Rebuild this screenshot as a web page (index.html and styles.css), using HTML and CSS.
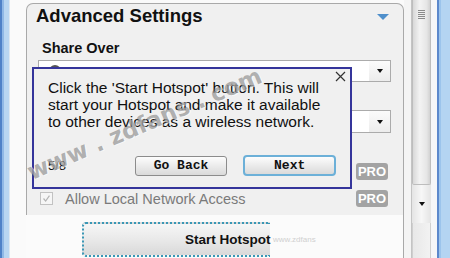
FILE: index.html
```html
<!DOCTYPE html>
<html>
<head>
<meta charset="utf-8">
<link rel="stylesheet" href="styles.css">
</head>
<body>
<div class="win">
  <div class="frame-l"></div>
  <div class="content">
    <section class="panel">
      <div class="panel-head">
        <h1 class="title">Advanced Settings</h1>
        <span class="caret"></span>
      </div>
      <div class="label">Share Over</div>
      <div class="select">
        <span class="sel-icon"></span>
        <span class="sel-val"></span>
        <span class="sel-btn"><i class="tri"></i></span>
      </div>
      <div class="label label2">Internet to Share</div>
      <div class="select">
        <span class="sel-val"></span>
        <span class="sel-btn"><i class="tri"></i></span>
      </div>
      <div class="opt opt1">
        <span class="chk"></span>
        <span class="opt-text">Enable Client Isolation</span>
        <span class="pro">PRO</span>
      </div>
      <div class="opt opt2">
        <span class="chk"><svg width="13" height="13" viewBox="0 0 13 13"><path d="M3 6.5 L5.5 9.5 L10 3" fill="none" stroke="#b4b4b4" stroke-width="1.4"/></svg></span>
        <span class="opt-text">Allow Local Network Access</span>
        <span class="pro">PRO</span>
      </div>
    </section>
    <div class="footer">
      <button class="start">Start Hotspot</button>
      <span class="ghost">www.zdfans</span>
    </div>
  </div>
  <div class="gap"></div>
  <div class="scroll">
    <div class="thumb"><span class="grip"></span></div>
    <div class="sarrow"><i class="tri"></i></div>
    <div class="track"></div>
  </div>
  <div class="gap2"></div>
  <div class="frame-r"></div>
</div>

<div class="dialog">
  <span class="close"><svg width="11" height="11" viewBox="0 0 11 11"><path d="M1 1 L10 10 M10 1 L1 10" stroke="#333" stroke-width="1.2"/></svg></span>
  <p class="msg">Click the 'Start Hotspot' button. This will<br>start your Hotspot and make it available<br>to other devices as a wireless network.</p>
  <div class="dlg-foot">
    <span class="step">5/8</span>
    <button class="dbtn">Go Back</button>
    <button class="dbtn next">Next</button>
  </div>
</div>

<div class="watermark">www . zdfans . com</div>
</body>
</html>
```

FILE: styles.css
```css
* { box-sizing: border-box; }
html, body { margin: 0; padding: 0; }
body {
  width: 450px;
  height: 258px;
  overflow: hidden;
  position: relative;
  background: #f9f9f9;
  font-family: "Liberation Sans", Arial, sans-serif;
}
.win {
  display: flex;
  height: 258px;
}
.frame-l {
  width: 10px;
  background: linear-gradient(to right, #4f82c8 0 2px, #8fb8e6 2px 4px, #b8d6f2 4px 9px, #dde8f2 9px);
}
.content {
  width: 394px;
  padding-left: 16px;
  display: flex;
  flex-direction: column;
  background: #fafafa;
}
.panel {
  margin-top: 3px;
  height: 212px;
  width: 378px;
  background: #f0f0f0;
  border: 1px solid #a9a9a9;
  border-bottom: 0;
  border-radius: 7px 7px 0 0;
}
.panel-head {
  display: flex;
  align-items: flex-start;
  justify-content: space-between;
  padding: 2px 14px 0 9px;
}
.title {
  margin: 0;
  font-size: 18.5px;
  line-height: 20px;
  font-weight: bold;
  color: #111;
}
.caret {
  margin-top: 8px;
  width: 0;
  height: 0;
  border-left: 6px solid transparent;
  border-right: 6px solid transparent;
  border-top: 6px solid #4f8fcb;
}
.label {
  margin: 14px 0 0 15px;
  font-size: 14.5px;
  line-height: 17px;
  font-weight: bold;
  color: #111;
}
.label2 { margin: 5px 0 6px 15px; }
.select {
  margin: 3px 0 0 11px;
  width: 353px;
  height: 22px;
  display: flex;
  background: #fff;
  border: 1px solid #ababab;
}
.label2 + .select { margin-top: 0; height: 23px; }
.sel-icon {
  margin: 4px 0 0 10px;
  width: 12px;
  height: 12px;
  border-radius: 50%;
  border: 2px solid #555;
}
.sel-val { flex: 1; }
.sel-btn {
  width: 21px;
  display: flex;
  align-items: center;
  justify-content: center;
  background: linear-gradient(#fbfbfb, #ececec);
}
.tri {
  display: block;
  width: 0;
  height: 0;
  border-left: 3.5px solid transparent;
  border-right: 3.5px solid transparent;
  border-top: 4px solid #111;
}
.opt {
  display: flex;
  align-items: center;
  height: 17px;
  padding: 0 15px 0 13px;
}
.opt1 { margin-top: 30px; }
.opt2 { margin-top: 10px; }
.chk {
  width: 13px;
  height: 13px;
  border: 1px solid #c2c2c2;
  background: #f6f6f6;
  display: flex;
  align-items: center;
  justify-content: center;
}
.chk svg { display: block; }
.opt-text {
  flex: 1;
  margin-left: 12px;
  font-size: 14.5px;
  color: #7a7a7a;
}
.pro {
  width: 32px;
  height: 17px;
  border-radius: 3px;
  background: #a3a3a3;
  color: #fff;
  font-weight: bold;
  font-size: 13px;
  line-height: 17px;
  text-align: center;
}
.footer {
  flex: 1;
  width: 378px;
  border-right: 1px solid #a9a9a9;
  padding: 7px 0 0 56px;
  display: flex;
  align-items: flex-start;
  background: #fbfbfb;
}
.start {
  width: 188px;
  height: 35px;
  margin: 0;
  padding: 0 0 0 101px;
  text-align: left;
  border: 2px dotted #3a97b5;
  border-right: 0;
  border-radius: 4px 0 0 4px;
  background: linear-gradient(#f6f6f6, #e9e9e9 50%, #d9d9d9);
  font-family: "Liberation Sans", Arial, sans-serif;
  font-weight: bold;
  font-size: 13.5px;
  color: #111;
  white-space: nowrap;
}
.ghost {
  margin: 13px 0 0 3px;
  font-size: 8px;
  color: #d0d0d0;
}
.gap {
  width: 7px;
  background: #f4f4f4;
}
.scroll {
  width: 20px;
  border-left: 1px solid #c4c4c4;
  display: flex;
  flex-direction: column;
  background: #ececec;
}
.thumb {
  height: 185px;
  border: 1px solid #bdbdbd;
  border-top: 0;
  border-radius: 0 0 2px 2px;
  background: linear-gradient(to right, #d8d8d8, #f3f3f3 40%, #e6e6e6 80%, #d2d2d2);
  display: flex;
  justify-content: center;
}
.grip {
  margin-top: 10px;
  width: 7px;
  height: 9px;
  background: repeating-linear-gradient(#8a8a8a 0 1px, transparent 1px 2px);
}
.sarrow {
  height: 38px;
  display: flex;
  align-items: center;
  justify-content: center;
  background: linear-gradient(to right, #e4e4e4, #f7f7f7 50%, #e4e4e4);
}
.track {
  flex: 1;
  border-left: 1px solid #cfcfcf;
  border-right: 1px solid #cfcfcf;
  background: linear-gradient(to right, #e8e8e8, #f2f2f2);
}
.gap2 {
  width: 6px;
  background: #f5f6f8;
}
.frame-r {
  width: 13px;
  background: linear-gradient(to right, #5b88cc 0 2px, #9cc4ec 2px 4px, #b4d4f2 4px);
}

.dialog {
  position: absolute;
  left: 32px;
  top: 67px;
  width: 320px;
  height: 122px;
  border: 2px solid #35359b;
  background: #f0f0f0;
  padding: 10px 14px 11px 14px;
  display: flex;
  flex-direction: column;
}
.close {
  position: absolute;
  right: 4px;
  top: 2px;
}
.close svg { display: block; }
.msg {
  margin: 0;
  font-size: 15.5px;
  line-height: 17px;
  color: #111;
  white-space: nowrap;
}
.dlg-foot {
  margin-top: auto;
  display: flex;
  align-items: center;
}
.step {
  width: 87px;
  font-size: 13px;
  color: #111;
}
.dbtn {
  width: 93px;
  height: 20px;
  margin: 0;
  padding: 0;
  border: 1px solid #8c8c8c;
  border-radius: 3px;
  background: linear-gradient(#fdfdfd, #ebebeb 50%, #dadada);
  font-family: "Liberation Mono", "Courier New", monospace;
  font-weight: bold;
  font-size: 13px;
  color: #111;
}
.next {
  margin-left: 16px;
  height: 21px;
  border: 2px solid #6cb0d8;
  border-radius: 4px;
}
.watermark {
  position: absolute;
  left: 33px;
  top: 160px;
  line-height: 24px;
  transform-origin: left bottom;
  transform: rotate(-23deg);
  font-family: "DejaVu Sans", sans-serif;
  font-weight: bold;
  font-size: 23px;
  color: rgba(105, 105, 105, 0.5);
  text-shadow: 1px 1px 0 rgba(255, 255, 255, 0.6);
  white-space: nowrap;
  pointer-events: none;
}
```
